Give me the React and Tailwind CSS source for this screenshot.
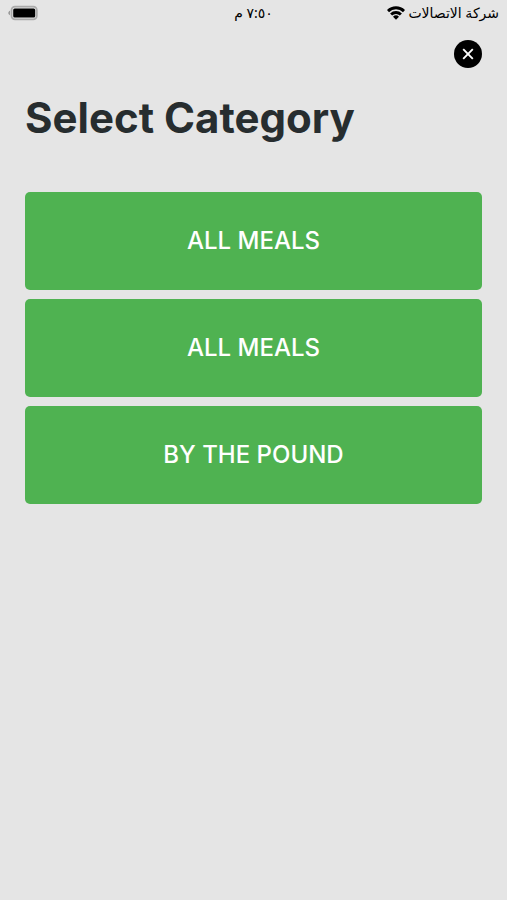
import React from 'react';

const categories = [
  { id: 1, name: 'ALL MEALS' },
  { id: 2, name: 'ALL MEALS' },
  { id: 3, name: 'BY THE POUND' },
];

function BatteryIcon() {
  return (
    <svg width="30" height="16" viewBox="0 0 30 16" aria-hidden="true">
      <path d="M2 5.8v4.4C.9 9.8.3 9 .3 8S.9 6.2 2 5.8z" fill="#999" />
      <rect x="3.5" y="1.7" width="25.3" height="12.6" rx="3.5" fill="#e5e5e5" stroke="#aaa" strokeWidth="1.8" />
      <rect x="5.2" y="3.6" width="22" height="9" rx="1.5" fill="#000" />
    </svg>
  );
}

function WifiIcon() {
  return (
    <svg width="18" height="14" viewBox="0 0 18 14" aria-hidden="true">
      <g fill="none" stroke="#000" strokeWidth="2.9">
        <path d="M1 5.1a11.4 11.4 0 0 1 16 0" />
        <path d="M4.1 8.5a7 7 0 0 1 9.8 0" />
      </g>
      <path d="M9 13.8L6 10.8a4.3 4.3 0 0 1 6 0z" fill="#000" />
    </svg>
  );
}

function StatusBar() {
  return (
    <div className="flex h-[26px] items-center justify-between px-2 font-['Noto_Sans','DejaVu_Sans',sans-serif] text-sm text-black">
      <div className="flex flex-1"><BatteryIcon /></div>
      <span dir="rtl">٧:٥٠ م</span>
      <div className="flex flex-1 items-center justify-end gap-[3px]">
        <WifiIcon />
        <span dir="rtl">شركة الاتصالات</span>
      </div>
    </div>
  );
}

export default function App() {
  return (
    <div className="min-h-screen bg-[#e5e5e5] font-['Inter',sans-serif]">
      <StatusBar />
      <main className="px-[25px] pt-[14px]">
        <div className="flex justify-end">
          <button type="button" aria-label="Close" className="flex size-7 items-center justify-center rounded-full bg-black">
            <svg width="12" height="12" viewBox="0 0 12 12" aria-hidden="true">
              <path d="M1.2 1.2l9.6 9.6M10.8 1.2l-9.6 9.6" stroke="#fff" strokeWidth="1.9" />
            </svg>
          </button>
        </div>
        <h1 className="mt-6 text-[42px] leading-[52px] font-bold text-[#272d2f]">Select Category</h1>
        <div className="mt-12 flex flex-col gap-[9px]">
          {categories.map(category => (
            <button
              key={category.id}
              type="button"
              className="h-[98px] w-full rounded-[5px] bg-[#4fb251] text-2xl font-medium text-white"
            >
              {category.name}
            </button>
          ))}
        </div>
      </main>
    </div>
  );
}
